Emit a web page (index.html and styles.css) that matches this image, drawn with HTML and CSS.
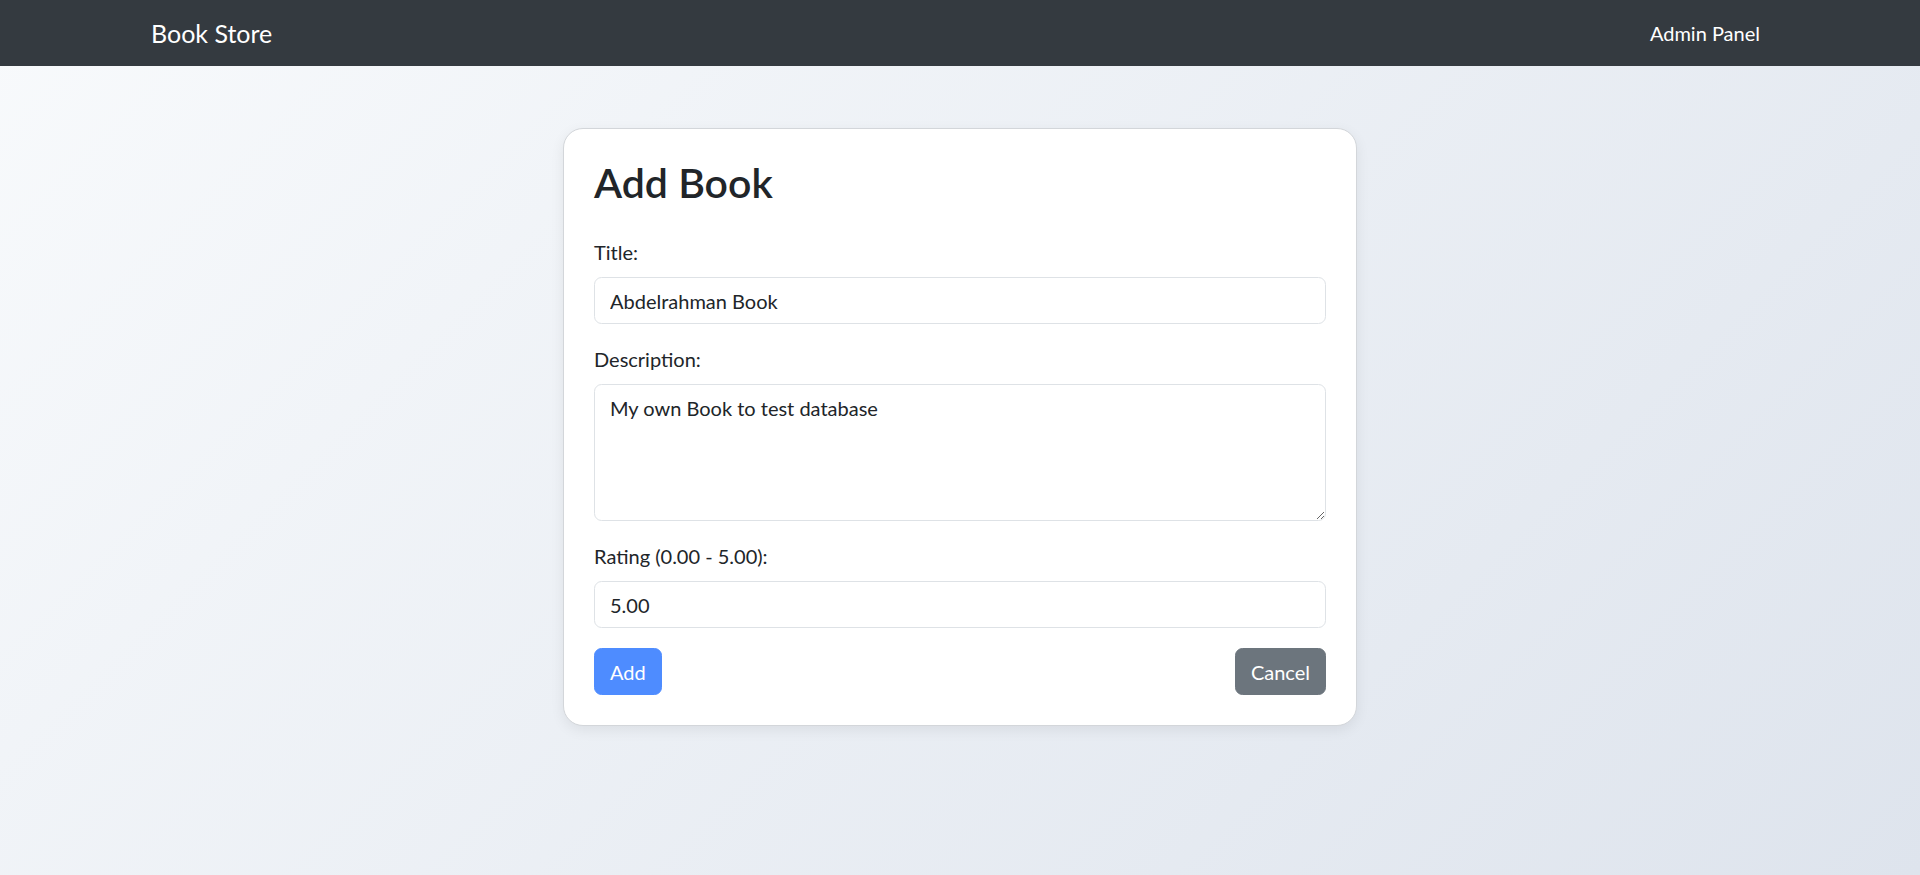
FILE: index.html
```html
<!DOCTYPE html>
<html lang="en">
<head>
<meta charset="utf-8">
<title>Book Store - Add Book</title>
<link rel="stylesheet" href="styles.css">
</head>
<body>
<nav class="navbar">
  <div class="nav-container">
    <a class="brand" href="#">Book Store</a>
    <a class="nav-link" href="#">Admin Panel</a>
  </div>
</nav>
<main class="main">
  <section class="card">
    <h2 class="card-title">Add Book</h2>
    <form class="form">
      <div class="group">
        <label class="form-label" for="title">Title:</label>
        <input class="form-control" id="title" type="text" value="Abdelrahman Book">
      </div>
      <div class="group">
        <label class="form-label" for="desc">Description:</label>
        <textarea class="form-control textarea" id="desc" rows="4">My own Book to test database</textarea>
      </div>
      <div class="group">
        <label class="form-label" for="rating">Rating (0.00 - 5.00):</label>
        <input class="form-control" id="rating" type="text" value="5.00">
      </div>
      <div class="actions">
        <button type="button" class="btn btn-primary">Add</button>
        <button type="button" class="btn btn-secondary">Cancel</button>
      </div>
    </form>
  </section>
</main>
</body>
</html>
```
FILE: styles.css
```css
* { box-sizing: border-box; }
html, body { margin: 0; padding: 0; }
body {
  font-family: Lato, "Noto Sans", sans-serif;
  color: #212529;
  min-height: 875px;
  background: linear-gradient(135deg, #f8fafc 0%, #dee4ed 100%);
}
.navbar {
  height: 66px;
  background: #343a40;
  display: flex;
  align-items: center;
}
.nav-container {
  width: 1650px;
  margin: 0 auto;
  padding: 0 15px;
  display: flex;
  align-items: center;
  justify-content: space-between;
}
.brand {
  color: #fff;
  text-decoration: none;
  font-size: 25px;
  line-height: 37px;
  margin-left: 1px;
}
.nav-link {
  color: #fff;
  text-decoration: none;
  font-size: 20px;
  line-height: 30px;
  padding: 0 10px;
}
.main {
  padding-top: 62px;
}
.card {
  width: 794px;
  margin: 0 auto;
  background: #fff;
  border: 1px solid #d3d6da;
  border-radius: 20px;
  padding: 30px;
  box-shadow: 0 4px 14px rgba(0, 0, 0, 0.07);
}
.card-title {
  margin: 0 0 30px;
  font-size: 41px;
  line-height: 48px;
  font-weight: 600;
  color: #212529;
}
.form { margin: 0; }
.group {
  display: flex;
  flex-direction: column;
  margin-bottom: 20px;
}
.form-label {
  font-size: 20px;
  line-height: 30px;
  margin-bottom: 10px;
}
.form-control {
  font-family: inherit;
  font-size: 20px;
  line-height: 30px;
  color: #212529;
  padding: 7.5px 15px;
  border: 1px solid #dee2e6;
  border-radius: 7.5px;
  background: #fff;
  width: 100%;
  outline: none;
}
.textarea {
  resize: vertical;
  height: 137px;
  display: block;
}
.actions {
  display: flex;
  justify-content: space-between;
}
.btn {
  font-family: inherit;
  font-size: 20px;
  line-height: 30px;
  padding: 7.5px 15px;
  border: 1px solid transparent;
  border-radius: 7.5px;
  color: #fff;
  cursor: pointer;
}
.btn-primary { background: #4e8cff; border-color: #4e8cff; }
.btn-secondary { background: #6c757d; border-color: #6c757d; }
```
